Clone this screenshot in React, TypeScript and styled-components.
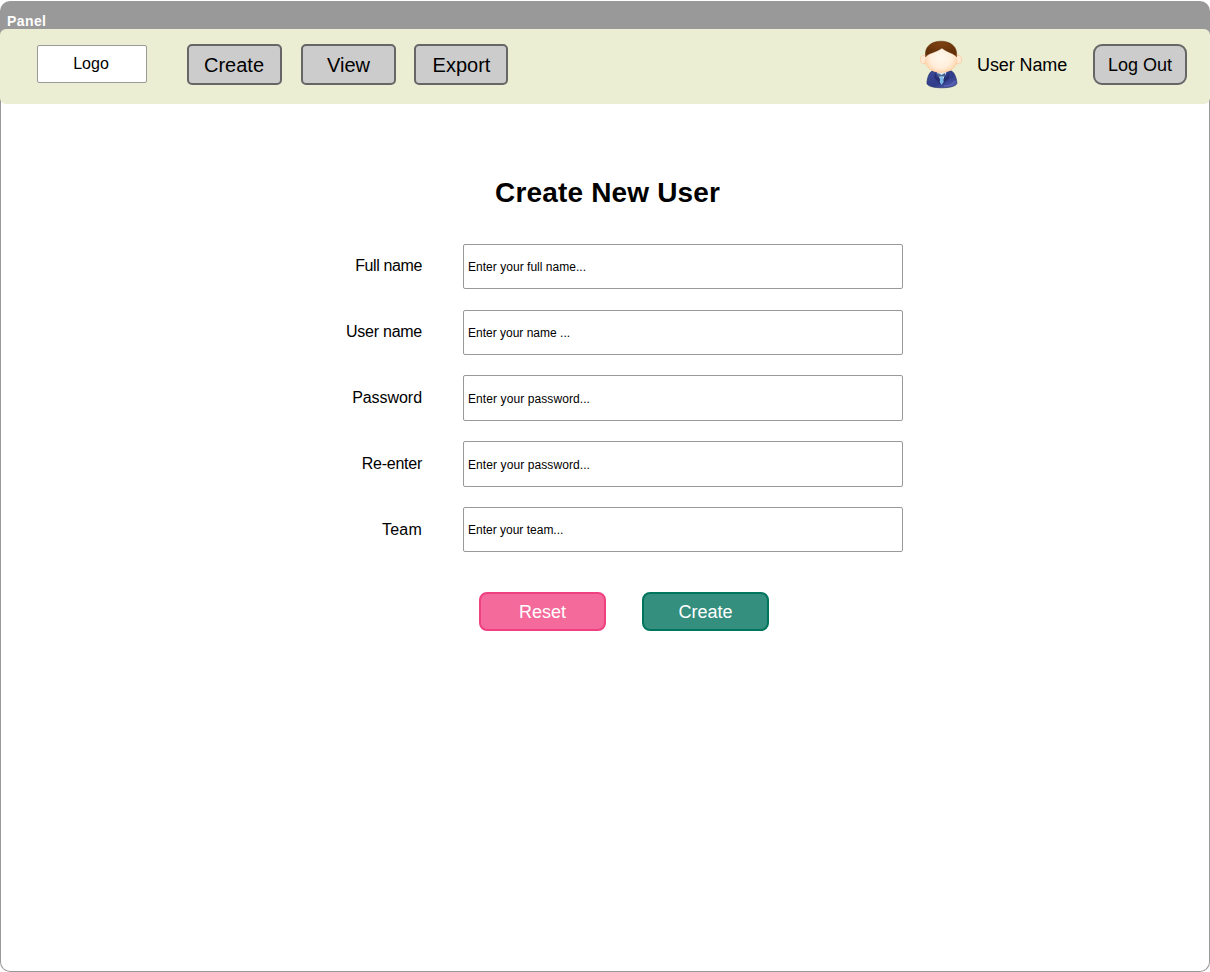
import React from "react";
import styled, { createGlobalStyle } from "styled-components";

const GlobalStyle = createGlobalStyle`
  *, *::before, *::after { box-sizing: border-box; }
  body {
    margin: 0;
    background: #fff;
    color: #000;
    font-family: "Liberation Sans", Arial, Helvetica, sans-serif;
  }
  button, input { font-family: inherit; margin: 0; }
`;

const Page = styled.div`
  width: 1210px;
  height: 972px;
  padding-top: 1px;
  overflow: hidden;
`;

const Panel = styled.div`
  height: 971px;
  display: flex;
  flex-direction: column;
  border-radius: 10px;
  background: linear-gradient(#999 60px, #fff 60px);
`;

const PanelTitle = styled.div`
  height: 28px;
  padding: 12px 0 0 7px;
  color: #fff;
  font-size: 14px;
  font-weight: bold;
  line-height: 16px;
  letter-spacing: 0.4px;
`;

const Header = styled.header`
  position: relative;
  height: 75px;
  flex: none;
  display: flex;
  align-items: flex-start;
  padding: 15px 23px 0 37px;
  border-radius: 6px;
  background: #ebeed3;
`;

const Logo = styled.div`
  width: 110px;
  height: 38px;
  margin: 1px 40px 0 0;
  border: 1px solid #999;
  border-radius: 2px;
  background: #fff;
  font-size: 16px;
  line-height: 35px;
  text-align: center;
  padding-right: 2px;
`;

const Nav = styled.nav`
  display: flex;
  margin-right: auto;
`;

const HeaderButton = styled.button<{ $width?: number; $gap?: number; $round?: boolean; $nudge?: number }>`
  width: ${(p) => p.$width ?? 95}px;
  height: 41px;
  margin-right: ${(p) => p.$gap ?? 0}px;
  padding: 1px ${(p) => Math.max(0, -(p.$nudge ?? 0))}px 0 ${(p) => Math.max(0, p.$nudge ?? 0)}px;
  border: 2px solid #666;
  border-radius: ${(p) => (p.$round ? 9 : 5)}px;
  background: #ccc;
  color: #000;
  font-size: ${(p) => (p.$round ? 18 : 20)}px;
  line-height: 36px;
`;

const Avatar = styled.svg`
  width: 44px;
  height: 50px;
  margin: -4px 0 0;
`;

const UserName = styled.span`
  width: 90px;
  margin: 0 26px 0 14px;
  font-size: 18px;
  line-height: 42px;
  letter-spacing: -0.1px;
  white-space: nowrap;
`;

const Content = styled.main`
  flex: 1;
  display: flex;
  flex-direction: column;
  margin-top: -10px;
  border: 1px solid #999;
  border-top: 0;
  border-radius: 0 0 10px 10px;
  background: #fff;
  padding-top: 83px;
`;

const Title = styled.h1`
  width: 226px;
  height: 32px;
  margin: 0 0 35px 494px;
  font-size: 28px;
  line-height: 32px;
  letter-spacing: 0.17px;
  white-space: nowrap;
`;

const Form = styled.form`
  display: flex;
  flex-direction: column;
`;

const Field = styled.label<{ $height: number }>`
  display: flex;
  height: ${(p) => p.$height}px;
`;

const FieldLabel = styled.span<{ $spacing: number; $line: number }>`
  width: 421px;
  margin-right: 41px;
  font-size: 16px;
  line-height: ${(p) => p.$line}px;
  letter-spacing: ${(p) => p.$spacing}px;
  text-align: right;
`;

const TextInput = styled.input<{ $height: number; $spacing: number }>`
  width: 440px;
  height: ${(p) => p.$height}px;
  padding: ${(p) => p.$height - 45}px 4px 0;
  border: 1px solid #999;
  border-radius: 2px;
  outline: 0;
  background: #fff;
  font-size: 12px;
  letter-spacing: ${(p) => p.$spacing}px;
  color: #000;
  &::placeholder { color: #000; opacity: 1; }
`;

const Actions = styled.div`
  display: flex;
  gap: 36px;
  padding: 19px 0 0 478px;
`;

const ActionButton = styled.button<{ $fill: string; $edge: string }>`
  width: 127px;
  height: 39px;
  padding: 1px 0 0;
  border: 2px solid ${(p) => p.$edge};
  border-radius: 8px;
  background: ${(p) => p.$fill};
  color: #fff;
  font-size: 18px;
  line-height: 34px;
`;

const fields = [
  { label: "Full name", placeholder: "Enter your full name...", row: 66, input: 45, line: 43, labelSpacing: -0.38, inputSpacing: 0.03 },
  { label: "User name", placeholder: "Enter your name ...", row: 65, input: 45, line: 43, labelSpacing: -0.26, inputSpacing: 0 },
  { label: "Password", placeholder: "Enter your password...", row: 66, input: 46, line: 45, labelSpacing: -0.05, inputSpacing: 0.09 },
  { label: "Re-enter", placeholder: "Enter your password...", row: 66, input: 46, line: 45, labelSpacing: -0.25, inputSpacing: 0.09 },
  { label: "Team", placeholder: "Enter your team...", row: 66, input: 45, line: 45, labelSpacing: 0.2, inputSpacing: 0 },
];

function UserAvatar() {
  return (
    <Avatar viewBox="0 0 44 50" aria-hidden="true">
      <defs>
        <radialGradient id="face" cx="50%" cy="50%" r="56%">
          <stop offset="0" stopColor="#fff8ec" />
          <stop offset="0.6" stopColor="#ffeedb" />
          <stop offset="1" stopColor="#ffd2a6" />
        </radialGradient>
        <radialGradient id="hair" cx="50%" cy="15%" r="70%">
          <stop offset="0" stopColor="#7d4212" />
          <stop offset="1" stopColor="#622f08" />
        </radialGradient>
        <linearGradient id="suit" x1="0" y1="0" x2="0.9" y2="1">
          <stop offset="0" stopColor="#3c4b98" />
          <stop offset="0.6" stopColor="#303b89" />
          <stop offset="1" stopColor="#5a62b8" />
        </linearGradient>
      </defs>
      <path d="M13 31C9.5 33 7.8 40 8 43.5C9 49.2 36.5 49.2 37.8 43.5C38 40 36 33 32.5 31Z" fill="url(#suit)" stroke="#27306e" strokeWidth="0.7" />
      <path d="M25 46C30 46 34 45 36 41" fill="none" stroke="#6971c2" strokeWidth="1.6" opacity="0.6" />
      <path d="M18 32L22.5 44L27.5 32Z" fill="#dce9f4" />
      <path d="M16 32L18 38L20 36L22 45L15.5 38Z" fill="#252f70" />
      <path d="M29.5 32L27.5 38L25.5 36L23 45L30 38Z" fill="#252f70" />
      <path d="M21.5 36H23.7L24.7 42L22.5 45L20.7 42Z" fill="#79b7e8" />
      <path d="M19.2 33L22.5 35L26 33V37L22.5 36L19.2 37Z" fill="#45628d" />
      <ellipse cx="5" cy="19.5" rx="3.6" ry="4.2" fill="#ffe9d2" stroke="#ffc99c" strokeWidth="0.8" />
      <ellipse cx="39" cy="19.5" rx="3.6" ry="4.2" fill="#ffe9d2" stroke="#ffc99c" strokeWidth="0.8" />
      <path d="M6 16C7 6 13 3 22 3S37 7 38 16C39 27 32 32.5 22 32.5S5 27 6 16Z" fill="url(#face)" />
      <path d="M6 20C6.5 28 13 32.2 22 32.2S37.5 28 38 20" fill="none" stroke="#ffc99c" strokeWidth="0.7" />
      <path d="M6.7 16.8C5 7 12 1.2 22 1.2S39 7 37.5 16.8C35 13 28 12.5 23 8C17 12.5 9 13 6.7 16.8Z" fill="url(#hair)" stroke="#592800" strokeWidth="0.5" />
    </Avatar>
  );
}

export default function App() {
  return (
    <Page>
      <GlobalStyle />
      <Panel>
        <PanelTitle>Panel</PanelTitle>
        <Header>
          <Logo>Logo</Logo>
          <Nav>
            <HeaderButton $gap={19} $nudge={-1}>Create</HeaderButton>
            <HeaderButton $gap={18}>View</HeaderButton>
            <HeaderButton $width={94} $nudge={1}>Export</HeaderButton>
          </Nav>
          <UserAvatar />
          <UserName>User Name</UserName>
          <HeaderButton $width={94} $round>Log Out</HeaderButton>
        </Header>
        <Content>
          <Title>Create New User</Title>
          <Form onSubmit={(e) => e.preventDefault()}>
            {fields.map((field) => (
              <Field key={field.label} $height={field.row}>
                <FieldLabel $spacing={field.labelSpacing} $line={field.line}>{field.label}</FieldLabel>
                <TextInput placeholder={field.placeholder} $height={field.input} $spacing={field.inputSpacing} />
              </Field>
            ))}
            <Actions>
              <ActionButton type="reset" $fill="#f46a9a" $edge="#ef4080">Reset</ActionButton>
              <ActionButton type="submit" $fill="#358f7e" $edge="#00755e">Create</ActionButton>
            </Actions>
          </Form>
        </Content>
      </Panel>
    </Page>
  );
}
